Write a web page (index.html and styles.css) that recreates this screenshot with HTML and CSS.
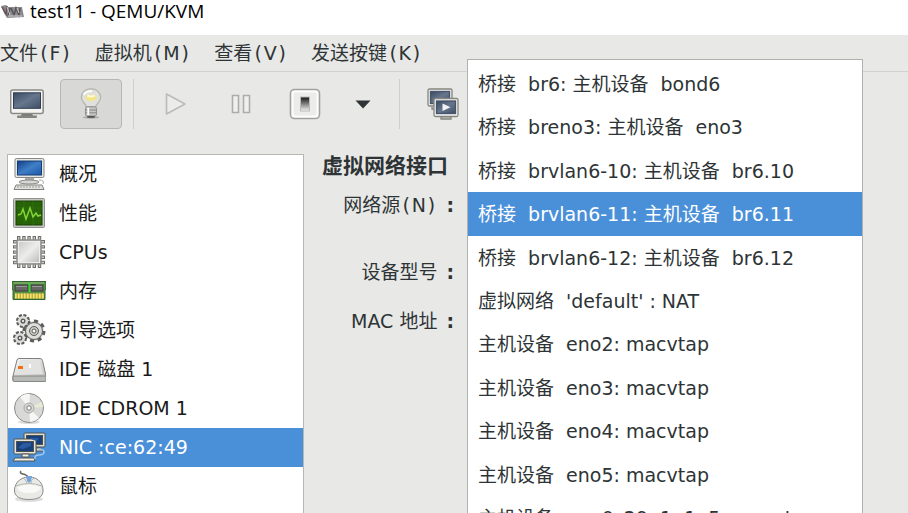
FILE: index.html
```html
<!DOCTYPE html>
<html lang="zh-CN">
<head>
<meta charset="utf-8">
<title>test11 - QEMU/KVM</title>
<link rel="stylesheet" href="styles.css">
</head>
<body>
<svg class="defs" width="0" height="0" aria-hidden="true">
  <defs>
    <linearGradient id="screen" x1="0" y1="0" x2="1" y2="1"><stop offset="0" stop-color="#3a4a62"/><stop offset=".5" stop-color="#66768c"/><stop offset="1" stop-color="#3f4f67"/></linearGradient>
    <linearGradient id="blue" x1="0" y1="0" x2="1" y2="1"><stop offset="0" stop-color="#123f85"/><stop offset=".5" stop-color="#3f7fc6"/><stop offset="1" stop-color="#1c58a8"/></linearGradient>
    <linearGradient id="metal" x1="0" y1="0" x2="1" y2="1"><stop offset="0" stop-color="#fafafa"/><stop offset="1" stop-color="#bdbdbb"/></linearGradient>
    <linearGradient id="dark" x1="0" y1="0" x2="0" y2="1"><stop offset="0" stop-color="#111"/><stop offset="1" stop-color="#f4f4f4"/></linearGradient>
    <linearGradient id="chip" x1="0" y1="0" x2="1" y2="1"><stop offset="0" stop-color="#c4c4c2"/><stop offset=".5" stop-color="#ededec"/><stop offset="1" stop-color="#b4b4b2"/></linearGradient>
  </defs>
</svg>
<header class="titlebar">
  <svg class="app-icon" width="24" height="15" viewBox="0 0 24 15"><path d="M1 2l5-1 2 2h14l2 10-17 1-3-5z" fill="#8b8b8e"/><path d="M2 3l4 7 1-8M10 4l-2 8M11 4l3 7 2-7 3 7 1-7" fill="none" stroke="#55555a" stroke-width="1.500"/><path d="M8 12h14M7 3l3 8M17 4l2 5" stroke="#d4c9cb" stroke-width="1"/><path d="M3 3l3 5" stroke="#a8606a"/></svg>
  <h1>test11 - QEMU/KVM</h1>
</header>
<nav class="menubar">
  <button>文件<span class="paren">(</span>F<span class="paren">)</span></button>
  <button>虚拟机<span class="paren">(</span>M<span class="paren">)</span></button>
  <button>查看<span class="paren">(</span>V<span class="paren">)</span></button>
  <button>发送按键<span class="paren">(</span>K<span class="paren">)</span></button>
</nav>
<div class="toolbar">
  <button class="tool tool-console" aria-label="控制台">
    <svg width="34" height="30" viewBox="0 0 34 30"><path d="M12 24h10l1 3H11z" fill="#777"/><rect x="7" y="26.500" width="20" height="2.500" rx="1" fill="#85857f"/><rect x=".7" y="1" width="32.500" height="23.500" rx="2" fill="#f4f4f2" stroke="#8a8a86" stroke-width="1.500"/><rect x="3.500" y="3.800" width="27" height="15.500" fill="url(#screen)" stroke="#303c50"/></svg>
  </button>
  <button class="tool tool-details" aria-label="详情" aria-pressed="true">
    <svg width="24" height="34" viewBox="0 0 26 34"><ellipse cx="13" cy="31.500" rx="9" ry="1.500" fill="#aaa"/><path d="M8 20C7 16 2.500 15 2.500 10a10.500 9.500 0 0 1 21 0c0 5-4.500 6-5.500 10z" fill="#e0e0dc" stroke="#b8b8b2" stroke-width="1.500"/><path d="M5 7a9 6 0 0 1 9-4" fill="none" stroke="#fff" stroke-width="2"/><path d="M7 9q6-4 12 0c1 3-3 5-6 5s-7-2-6-5z" fill="#f2e58a"/><path d="M9 8q4 2 8 0" stroke="#fffbd2" stroke-width="2" fill="none"/><rect x="7" y="20" width="12" height="10" rx="2" fill="#c4c4c0" stroke="#8c8c88"/><path d="M7 23.500h12M7 26.500h12" stroke="#868682"/><path d="M10 21v8" stroke="#fff" stroke-width="2"/><path d="M9 30h8v2H9z" fill="#555"/></svg>
  </button>
  <span class="divider"></span>
  <button class="tool tool-run" aria-label="运行">
    <svg width="22" height="24" viewBox="0 0 22 24"><path d="M1.500 2v20L20 12z" fill="#ececea" stroke="#bcbcb9" stroke-width="1.700" stroke-linejoin="round"/></svg>
  </button>
  <button class="tool tool-pause" aria-label="暂停">
    <svg width="20" height="20" viewBox="0 0 20 20"><path d="M1.500 1.500h6v17h-6zM12.500 1.500h6v17h-6z" fill="#efefed" stroke="#adada9" stroke-width="1.600"/></svg>
  </button>
  <button class="tool tool-power" aria-label="关机">
    <svg width="32" height="32" viewBox="0 0 32 32"><rect x="1.500" y="1.500" width="29" height="29" rx="4" fill="#fdfdfd" stroke="#a2a2a0" stroke-width="1.600"/><rect x="4.500" y="4.500" width="23" height="23" rx="2" fill="#ececea"/><rect x="11.500" y="9" width="9" height="14" fill="url(#dark)" stroke="#bbb"/></svg>
  </button>
  <button class="tool tool-more" aria-label="更多">
    <svg width="16" height="9" viewBox="0 0 16 9"><path d="M.5.5h15L8 8.500z" fill="#2e3436"/></svg>
  </button>
  <span class="divider"></span>
  <button class="tool tool-snap" aria-label="快照">
    <svg width="32" height="32" viewBox="0 0 32 32"><g stroke="#85857f" stroke-width="1.300"><rect x="1" y="1" width="24" height="17" rx="1.500" fill="#eee"/><rect x="3.500" y="3.500" width="19" height="12" fill="url(#screen)" stroke="#46546a"/><path d="M5 19v2h5" fill="none"/><path d="M14 28.500h10v2.500H14z" fill="#ccc"/><rect x="7" y="10.500" width="24" height="18" rx="1.500" fill="#f3f3f1"/><rect x="9.500" y="13" width="19" height="12.500" fill="url(#screen)" stroke="#46546a"/></g><path d="M15.500 15.500v7.500l8-3.700z" fill="#f2f2f2"/></svg>
  </button>
</div>
<main class="content">
  <div class="devices" role="listbox" aria-label="硬件">
    <button role="option"><svg width="34" height="34" viewBox="0 0 34 34"><path d="M13 20h9v5h-9z" fill="#aaa"/><ellipse cx="17" cy="25" rx="10" ry="2" fill="#d8d8d6" stroke="#898985"/><path d="M27 23q6 0 4 4" fill="none" stroke="#aaa"/><rect x="3" y="1.500" width="29" height="19" rx="1.500" fill="#e6e6e2" stroke="#888a85"/><rect x="5.500" y="4" width="24" height="14" fill="url(#blue)" stroke="#173c78"/><path d="M4 28h26l2 4.500H2z" fill="#e2e2df" stroke="#80827d"/><path d="M5 30h23" stroke="#989a94" stroke-dasharray="2 1"/></svg>概况</button>
    <button role="option"><svg width="34" height="34" viewBox="0 0 34 34"><rect x="1.500" y="2.500" width="31" height="29" rx="1" fill="#c4c6c1" stroke="#90928d"/><rect x="4" y="5" width="26" height="24" fill="#276408" stroke="#183f06"/><path d="M4 12h26M4 20h26M12 5v24M21 5v24" stroke="#2f6d0e"/><path d="M6 19l3-1 2-5 3 10 4-11 3 9 3-4 2 3 3-1" fill="none" stroke="#84d636" stroke-width="1.500"/></svg>性能</button>
    <button role="option"><svg width="34" height="34" viewBox="0 0 34 34"><g fill="none" stroke="#6c6e6a" stroke-width="6" stroke-linecap="butt"><path d="M5 4h25M5 30h25M4 5v25M30 5v25" stroke-dasharray="3.400 1.800"/></g><g fill="none" stroke="#c9cac7" stroke-width="4"><path d="M6 4h24M6 30h24M4 6v24M30 6v24" stroke-dasharray="1.400 3.800"/></g><rect x="5" y="5" width="24" height="24" rx="1" fill="url(#chip)" stroke="#8c8e8a" stroke-width="1.500"/><rect x="6.500" y="6.500" width="21" height="21" fill="none" stroke="#eee"/></svg>CPUs</button>
    <button role="option"><svg width="34" height="34" viewBox="0 0 34 34"><path d="M0 7.500h34v8h-1v10H1v-10H0z" fill="#579047" stroke="#32642e"/><path d="M2 9h30" stroke="#8abd78"/><rect x="3" y="11" width="13" height="6" fill="#666864" stroke="#3c3e3a"/><rect x="19" y="11" width="12" height="6" fill="#666864" stroke="#3c3e3a"/><path d="M4 12.500h11M20 12.500h10" stroke="#999"/><path d="M17.500 9v9" stroke="#3ad239" stroke-width="2"/><path d="M3 22h29" stroke="#c2b23c" stroke-width="5"/><path d="M3 22h29" stroke="#f0e070" stroke-width="5" stroke-dasharray="1.600 1.400"/></svg>内存</button>
    <button role="option"><svg width="34" height="34" viewBox="0 0 34 34"><g fill="#dededb" stroke="#5c5e5a"><circle cx="22" cy="18" r="10" stroke-width="3" stroke-dasharray="4 3.800"/><circle cx="22" cy="18" r="8.500"/><circle cx="22" cy="18" r="4.500" fill="#c8c8c5"/><circle cx="22" cy="18" r="2" fill="#fff"/><circle cx="11" cy="8" r="5.800" stroke-width="2.500" stroke-dasharray="3 1.500"/><circle cx="11" cy="8" r="4.500" stroke="#ddd"/><circle cx="11" cy="8" r="1.800" fill="#fff" stroke-width="1.500"/><circle cx="8" cy="25" r="5.800" stroke-width="2.500" stroke-dasharray="3 1.500"/><circle cx="8" cy="25" r="4.500" stroke="#ddd"/><circle cx="8" cy="25" r="1.800" fill="#fff" stroke-width="1.500"/></g></svg>引导选项</button>
    <button role="option"><svg width="34" height="34" viewBox="0 0 34 34"><path d="M7 6.500h21q2 0 2.500 2L34 24v4q0 1.500-2 1.500H2.500Q1 29.500 1 28v-4L5 8q.5-1.500 2-1.500z" fill="url(#metal)" stroke="#7e807c"/><path d="M1 24h33v4.500q0 1-2 1H2.500Q1 29.500 1 28z" fill="#b8bab7" stroke="#858783"/><path d="M8 8h19l4 14H4z" fill="#e2e2e0"/><path d="M18 12v4" stroke="#fff" stroke-width="2"/><rect x="6" y="14" width="5" height="3" fill="#f0701a"/></svg>IDE 磁盘 1</button>
    <button role="option"><svg width="34" height="34" viewBox="0 0 34 34"><ellipse cx="17" cy="31" rx="11" ry="2" fill="#ddd"/><circle cx="17" cy="17" r="14.500" fill="#d9d9d7" stroke="#8b8d89"/><path d="M17 17L8 6q5-4 10-3zM17 17l10 10q-5 4-9 4z" fill="#f6f6f5"/><path d="M17 17L30 11l1 5z" fill="#e8ead2"/><circle cx="17" cy="17" r="5" fill="#d5d5d2" stroke="#aaa"/><circle cx="17" cy="17" r="2.200" fill="#fff" stroke="#777"/></svg>IDE CDROM 1</button>
    <button role="option" aria-selected="true"><svg width="34" height="34" viewBox="0 0 34 34"><g stroke="#50524e"><rect x="12" y="3" width="21" height="14" rx="1" fill="#dcdcd2"/><rect x="14.500" y="5.500" width="16" height="9" fill="#173f7b"/><path d="M24 18h5l2 3h-7z" fill="#e6e6dc"/><rect x="2" y="9" width="22" height="15" rx="1" fill="#e6e6dc"/><rect x="4.500" y="11.500" width="17" height="10" fill="#173f7b"/><path d="M10 24h7v3h-7zM3 28h19l1 3H1z" fill="#eeeee6"/></g><path d="M6 18l5-5h8v3l-8 3zM18 8h9l-2 3-4-1z" fill="#2a5a9f"/><path d="M26 19q6 0 6 3t-5 3-4 4" stroke="#9fc7f0" stroke-width="1.500" fill="none"/></svg>NIC :ce:62:49</button>
    <button role="option"><svg width="34" height="34" viewBox="0 0 34 34"><ellipse cx="17" cy="30" rx="14" ry="3" fill="#ddd"/><path d="M9 2q-2 2 2 3t5 3" fill="none" stroke="#686a66" stroke-width="1.500"/><path d="M17 8C6 8 2 17 2.500 22c.5 6 6 8.500 14.500 8.500S31 28 31 22C31.500 17 28 8 17 8z" fill="#e9e9e6" stroke="#8b8d89"/><path d="M4 17q13-5 26 0M11 9q4 2 4 6M22 9q-4 2-3 6" fill="none" stroke="#b5b5b2"/><path d="M5 18q12-5 24 0-1 6-12 6T5 18z" fill="#f9f9f8"/><path d="M14 7h6l-1 5-2 2-2-2z" fill="#73a5dc"/></svg>鼠标</button>
  </div>
  <section class="details">
    <h2>虚拟网络接口</h2>
    <p class="field field-source" id="source-label">网络源<span class="paren">(</span>N<span class="paren">)</span><span class="colon">:</span></p>
    <p class="field">设备型号<span class="colon">:</span></p>
    <p class="field">MAC 地址<span class="colon">:</span></p>
  </section>
</main>
<div class="popup" role="listbox" aria-labelledby="source-label">
  <button role="option">桥接&nbsp; br6: 主机设备&nbsp; bond6</button>
  <button role="option">桥接&nbsp; breno3: 主机设备&nbsp; eno3</button>
  <button role="option">桥接&nbsp; brvlan6-10: 主机设备&nbsp; br6.10</button>
  <button role="option" aria-selected="true">桥接&nbsp; brvlan6-11: 主机设备&nbsp; br6.11</button>
  <button role="option">桥接&nbsp; brvlan6-12: 主机设备&nbsp; br6.12</button>
  <button role="option">虚拟网络&nbsp; 'default' : NAT</button>
  <button role="option">主机设备&nbsp; eno2: macvtap</button>
  <button role="option">主机设备&nbsp; eno3: macvtap</button>
  <button role="option">主机设备&nbsp; eno4: macvtap</button>
  <button role="option">主机设备&nbsp; eno5: macvtap</button>
  <button role="option">主机设备&nbsp; enp0s29u1u1u5: macvtap</button>
</div>
</body>
</html>
```

FILE: styles.css
```css
* {
  box-sizing: border-box;
}

body {
  margin: 0;
  height: 100vh;
  display: flex;
  flex-direction: column;
  position: relative;
  overflow: hidden;
  background: #e8e8e6;
  color: #2e3436;
  font: 19px/24px "DejaVu Sans", "Noto Sans CJK SC", sans-serif;
}

button {
  margin: 0;
  padding: 0;
  border: 0;
  background: none;
  color: inherit;
  font: inherit;
  text-align: left;
  white-space: nowrap;
}

svg {
  display: block;
  flex: none;
}

.defs {
  position: absolute;
}

.titlebar {
  flex: none;
  display: flex;
  gap: 6px;
  height: 35px;
  padding-bottom: 13px;
  align-items: center;
  background: #fff;
  color: #000;
}

.titlebar h1 {
  margin: 0;
  font: 19px/24px "Open Sans", "Noto Sans", sans-serif;
}

.menubar {
  flex: none;
  display: flex;
  gap: 23px;
  height: 37px;
  align-items: center;
  border-bottom: 1px solid #d2d2cf;
}

.paren {
  font-family: "DejaVu Sans Mono", monospace;
}

.toolbar {
  flex: none;
  display: flex;
  height: 82px;
  padding: 7px 0 0 10px;
  align-items: flex-start;
}

.tool {
  display: flex;
  height: 50px;
  align-items: center;
  justify-content: center;
}

.tool-console {
  width: 34px;
  margin-right: 16px;
}

.tool-details {
  width: 62px;
  margin-right: 11px;
  border: 1px solid #b7b7b3;
  border-radius: 4px;
  background: #d8d8d6;
}

.divider {
  width: 1px;
  height: 50px;
  background: #cfcfcc;
}

.tool-run {
  width: 84px;
}

.tool-pause {
  width: 46px;
}

.tool-power {
  width: 82px;
}

.tool-more {
  width: 34px;
}

.tool-more + .divider {
  margin-left: 19px;
}

.tool-snap {
  width: 86px;
}

.content {
  flex: 1;
  display: flex;
  min-height: 0;
  padding-left: 7px;
}

.devices {
  width: 297px;
  overflow: hidden;
  border: 1px solid #b6b6b3;
  border-bottom: 0;
  background: #fff;
  color: #1a1a1a;
}

.devices button {
  display: flex;
  width: 100%;
  height: 39px;
  padding: 0 0 2px 4px;
  gap: 13px;
  align-items: center;
}

.devices [aria-selected="true"],
.popup [aria-selected="true"] {
  background: #4a90d9;
  color: #fff;
}

.details {
  width: 152px;
  text-align: right;
}

.details h2 {
  margin: 0;
  padding-right: 8px;
  font-size: 21px;
  line-height: 24px;
  white-space: nowrap;
}

.field {
  margin: 0 0 25px;
  padding-right: 2px;
  white-space: nowrap;
}

.field-source {
  margin: 15px 0 43px;
}

.colon {
  padding-left: 9px;
  font-weight: bold;
}

.popup {
  position: absolute;
  top: 59px;
  bottom: -30px;
  left: 467px;
  width: 396px;
  display: flex;
  flex-direction: column;
  padding: 2px 0;
  border: 1px solid #b0b0ad;
  background: #fff;
}

.popup button {
  flex: 1;
  padding-left: 10px;
}
```
